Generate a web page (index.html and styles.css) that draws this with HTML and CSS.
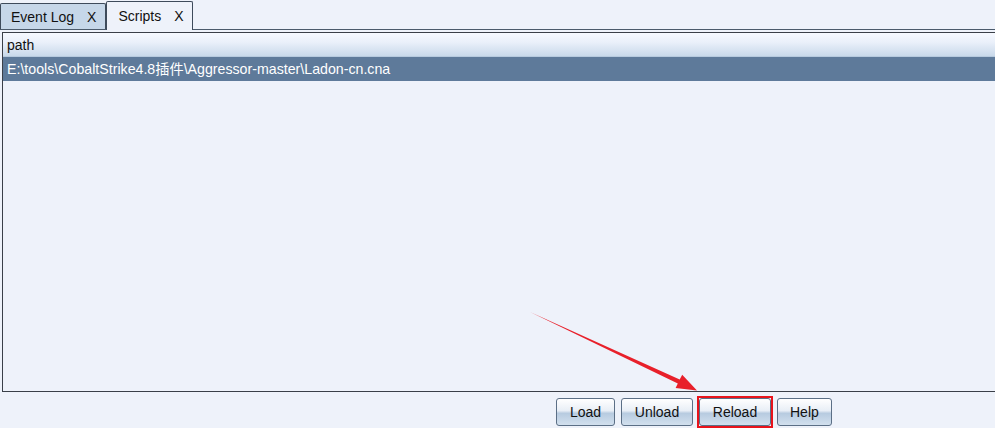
FILE: index.html
```html
<!DOCTYPE html>
<html lang="zh">
<head>
  <meta charset="UTF-8" />
  <title>Scripts</title>
  <link rel="stylesheet" href="styles.css">
</head>
<body>
  <div class="tabs">
    <div class="tab">Event Log <span class="close">X</span></div>
    <div class="tab active">Scripts <span class="close">X</span></div>
  </div>

  <div class="panel">
    <div class="head">path</div>
    <div class="row selected">E:\tools\CobaltStrike4.8插件\Aggressor-master\Ladon-cn.cna</div>
  </div>

  <div class="actions">
    <button class="load">Load</button>
    <button class="mid">Unload</button>
    <span class="mark"><button class="mid">Reload</button></span>
    <button>Help</button>
  </div>

  <!-- fleche rouge vers Reload -->
  <svg class="arrow" width="995" height="428" viewBox="0 0 995 428">
    <polygon points="530,312 679.7,379.4 682.2,374.8 697,390.5 675.6,388 677.8,383.4" fill="#e8202a" />
  </svg>
</body>
</html>
```

FILE: styles.css
```css
body {
  margin: 0;
  height: 428px;
  overflow: hidden;
  background: #eef2fa;
  font-family: "Liberation Sans", Arial, "Noto Sans CJK SC", sans-serif;
  font-size: 14px;
  color: #111;
  position: relative;
}

.tabs {
  display: flex;
  align-items: flex-end;
  height: 29px;
  border-bottom: 1px solid #4b5a6b;
}

.tab {
  display: flex;
  align-items: center;
  gap: 13px;
  height: 25px;
  padding: 0 9px 0 10px;
  background: #c6d7e9;
  border: 1px solid #3e4b5b;
  border-bottom: none;
  border-radius: 2px 2px 0 0;
}

.tab.active {
  height: 28px;
  margin-bottom: -1px;
  padding: 0 8px 0 11px;
  background: #eef2fa;
}

.close {
  font-size: 14px;
}

.panel {
  margin: 2px -10px 0 2px;
  height: 358px;
  border: 1px solid #3a3f48;
  background: #eef2fa;
}

.head {
  height: 23px;
  line-height: 24px;
  padding-left: 4px;
  background: linear-gradient(to bottom, #f6f9ff, #eaf0fa 40%, #c9d9ea);
  border-bottom: 1px solid #b7cade;
}

.row {
  height: 24px;
  line-height: 24px;
  padding-left: 4px;
  font-size: 14.2px;
}

.row.selected {
  background: #5e7a9a;
  color: #fff;
}

.actions {
  display: flex;
  align-items: flex-start;
  gap: 6px;
  margin-top: 6px;
  padding-left: 556px;
}

button {
  height: 28px;
  padding: 0 12px;
  font-family: "Liberation Sans", Arial, sans-serif;
  font-size: 14px;
  color: #111;
  border: 1px solid #5b6f86;
  border-radius: 3px;
  background: linear-gradient(to bottom, #ffffff, #e8eef6 45%, #b7cbe0 55%, #d2e0ee);
}

button.load {
  min-width: 59px;
}

button.mid {
  min-width: 72px;
}

.mark {
  display: flex;
  margin: -2px -2px 0;
  border: 2px solid #e8141c;
}

.arrow {
  position: absolute;
  left: 0;
  top: 0;
  pointer-events: none;
}
```
